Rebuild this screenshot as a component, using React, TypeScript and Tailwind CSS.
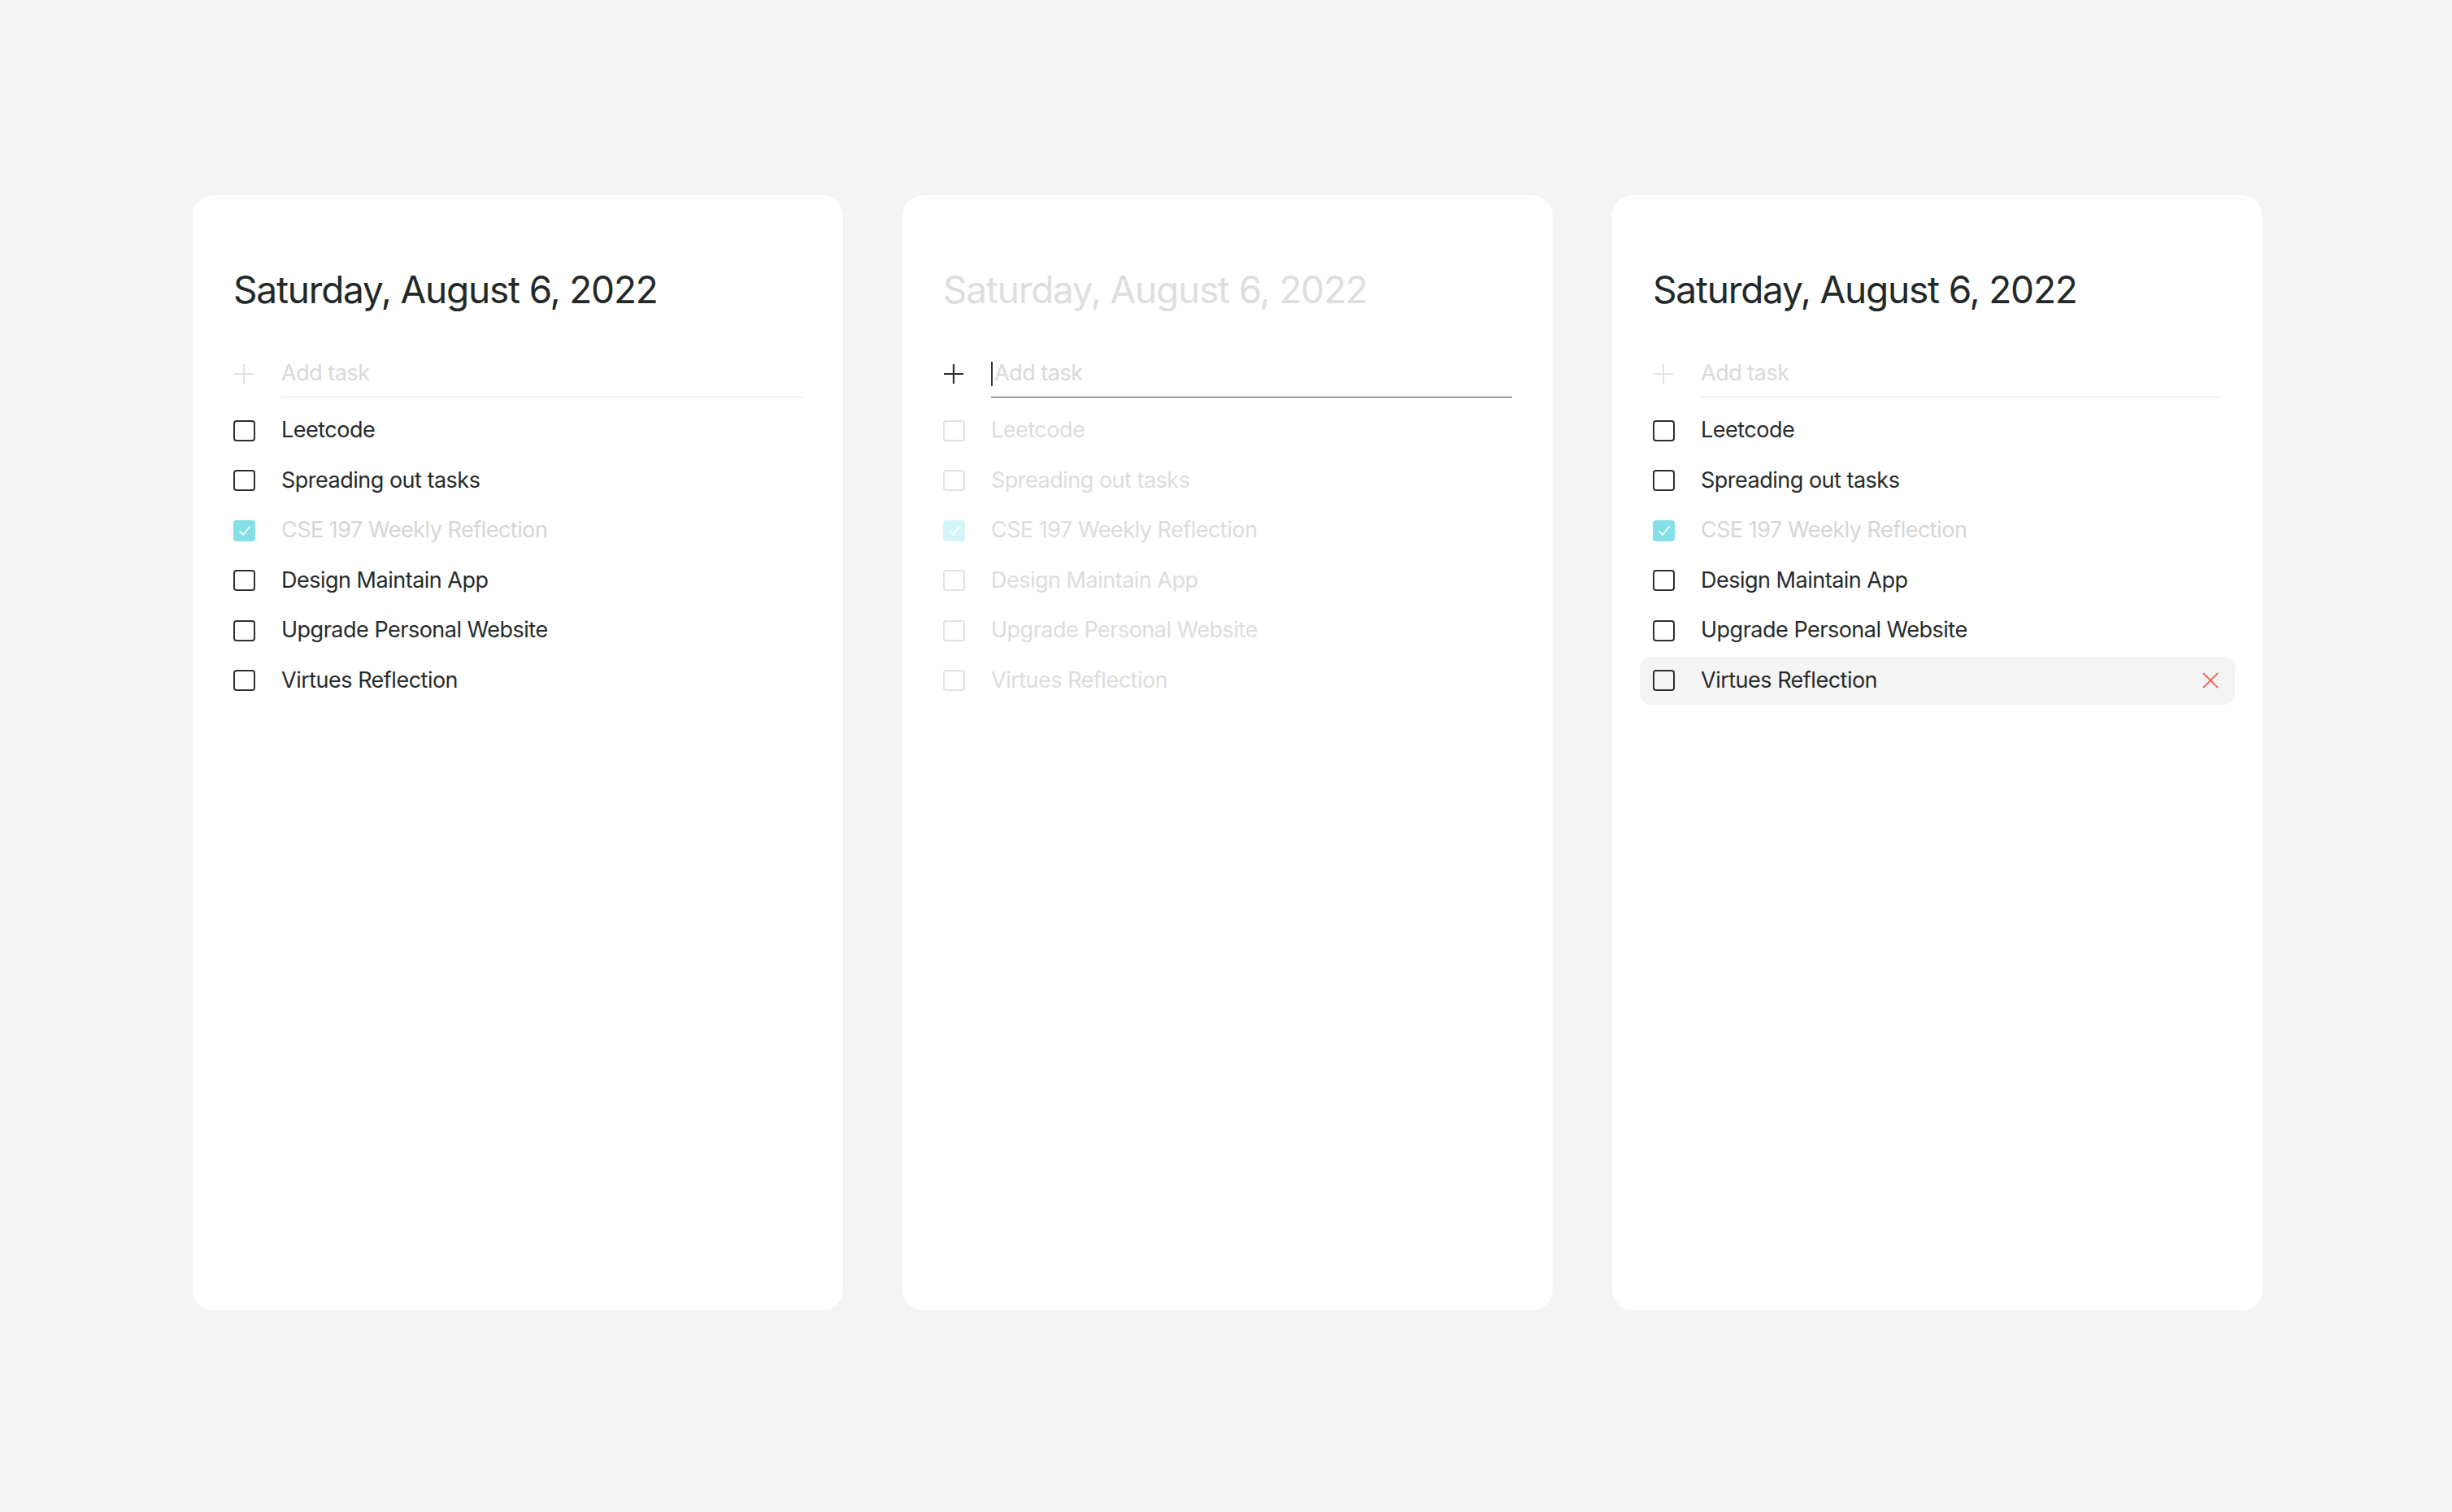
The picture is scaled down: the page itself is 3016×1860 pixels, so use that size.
import React from "react";

type Task = { label: string; done: boolean };

const tasks: Task[] = [
  { label: "Leetcode", done: false },
  { label: "Spreading out tasks", done: false },
  { label: "CSE 197 Weekly Reflection", done: true },
  { label: "Design Maintain App", done: false },
  { label: "Upgrade Personal Website", done: false },
  { label: "Virtues Reflection", done: false },
];

function PlusIcon({ dark }: { dark: boolean }) {
  return (
    <svg width="26" height="26" viewBox="0 0 26 26" fill="none">
      <path
        d="M13 1v24M1 13h24"
        stroke={dark ? "#2b2f2f" : "#dcdcdc"}
        strokeWidth={dark ? 2.2 : 1.6}
      />
    </svg>
  );
}

function Checkbox({ done, faded }: { done: boolean; faded: boolean }) {
  if (done) {
    return (
      <div
        className={
          "flex h-[26px] w-[27px] shrink-0 items-center justify-center rounded-[4px] " +
          (faded ? "bg-[#d4f5f8]" : "bg-[#85dfe7]")
        }
      >
        <svg width="16" height="14" viewBox="0 0 16 14" fill="none">
          <path d="M2 7.5l4 4.5 8-10" stroke="#ffffff" strokeWidth="1.6" strokeLinecap="round" strokeLinejoin="round" />
        </svg>
      </div>
    );
  }
  return (
    <div
      className={
        "h-[26px] w-[27px] shrink-0 rounded-[4px] border-2 " +
        (faded ? "border-[#e2e2e2]" : "border-[#2b3030]")
      }
    />
  );
}

function XIcon() {
  return (
    <svg width="20" height="20" viewBox="0 0 20 20" fill="none">
      <path d="M1 1l18 18M19 1L1 19" stroke="#f2685a" strokeWidth="1.8" />
    </svg>
  );
}

function Card({ variant }: { variant: "normal" | "focused" | "hover" }) {
  const faded = variant === "focused";
  return (
    <div className="flex h-[1372px] w-[800px] shrink-0 flex-col rounded-[26px] bg-white px-[50px] pt-[88px]">
      <h1
        className={
          "text-[46px] leading-[56px] font-normal tracking-[-1.2px] " +
          (faded ? "text-[#dedede]" : "text-[#232929]")
        }
      >
        Saturday, August 6, 2022
      </h1>
      <div className="mt-[47px] flex h-[58px] items-center">
        <div className="flex w-[59px] shrink-0 items-center">
          <PlusIcon dark={faded} />
        </div>
        <div
          className={
            "flex h-full flex-1 items-center border-b " +
            (faded ? "border-[#3a3d3d]" : "border-[#e3e3e3]")
          }
        >
          {faded && <div className="mr-[2px] h-[30px] w-[2px] bg-[#333]" />}
          <span className="text-[27px] tracking-[-0.5px] text-[#d9d9d9]">Add task</span>
        </div>
      </div>
      <div className="mt-[11px] flex flex-col gap-[2.5px]">
        {tasks.map((t, i) => {
          const hovered = variant === "hover" && i === tasks.length - 1;
          const textColor = faded
            ? "text-[#dcdcdc]"
            : t.done
            ? "text-[#d6d6d6]"
            : "text-[#262b2b]";
          return (
            <div
              key={t.label}
              className={
                "-mx-[16px] flex h-[59px] items-center rounded-[14px] px-[16px] " +
                (hovered ? "bg-[#f4f4f4]" : "")
              }
            >
              <div className="flex w-[59px] shrink-0 items-center">
                <Checkbox done={t.done} faded={faded} />
              </div>
              <span className={"flex-1 text-[27px] tracking-[-0.5px] " + textColor}>{t.label}</span>
              {hovered && (
                <div className="mr-[4px] flex items-center">
                  <XIcon />
                </div>
              )}
            </div>
          );
        })}
      </div>
    </div>
  );
}

export default function App() {
  return (
    <div
      className="flex h-[1860px] w-full justify-center gap-[73px] bg-[#f4f4f4] pl-[4px] pt-[240px]"
      style={{ fontFamily: "Inter, 'Noto Sans', sans-serif" }}
    >
      <Card variant="normal" />
      <Card variant="focused" />
      <Card variant="hover" />
    </div>
  );
}
